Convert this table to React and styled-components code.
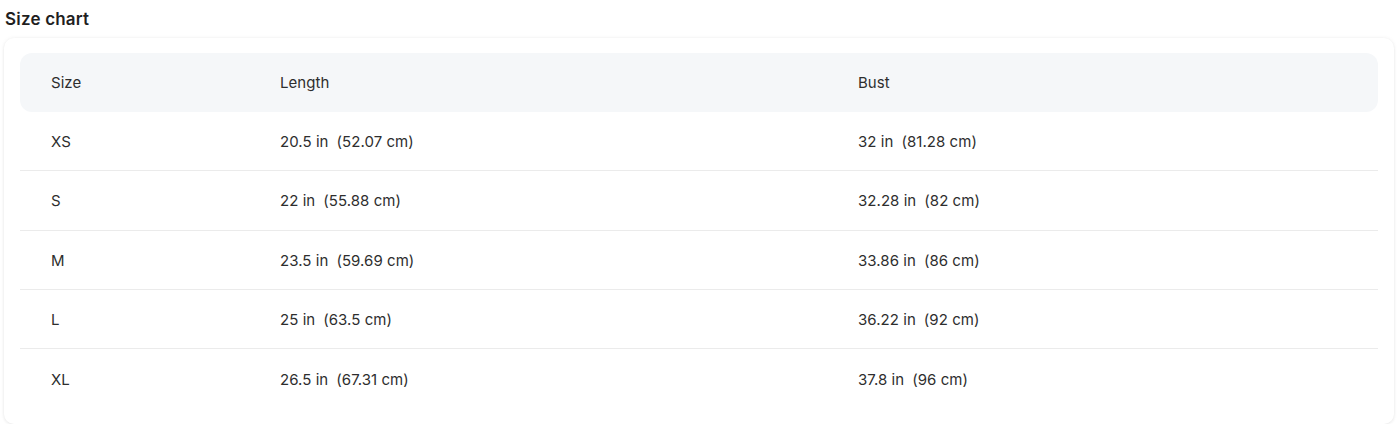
import React from "react";
import styled, { createGlobalStyle } from "styled-components";

const Global = createGlobalStyle`
  html, body { margin: 0; padding: 0; background: #fff; }
  body { font-family: Inter, "Noto Sans", sans-serif; color: #2b2b2b; }
`;

const Page = styled.div`
  padding: 6px 6px 0 4px;
  width: 1390px;
`;

const Title = styled.h2`
  margin: 0 0 0 1px;
  font-size: 17px;
  line-height: 26px;
  font-weight: 600;
  color: #1f1f1f;
  letter-spacing: 0.2px;
`;

const Card = styled.div`
  margin-top: 6px;
  background: #fff;
  border-radius: 10px;
  box-shadow: 0 0 4px rgba(0, 0, 0, 0.06), 0 1px 3px rgba(0, 0, 0, 0.06);
  padding: 15px 16px 16px 16px;
`;

const Row = styled.div`
  box-sizing: border-box;
  display: grid;
  grid-template-columns: 229px 578px 1fr;
  align-items: center;
  height: ${(p) => (p.$head ? "59px" : "59.3px")};
  padding-top: ${(p) => (p.$head ? "0" : "1px")};
  background: ${(p) => (p.$head ? "#f5f7f9" : "transparent")};
  border-radius: ${(p) => (p.$head ? "12px" : "0")};
  border-bottom: ${(p) => (p.$last || p.$head ? "none" : "1px solid #ebebeb")};
`;

const Cell = styled.div`
  padding-left: 31px;
  font-size: 15px;
  letter-spacing: 0.05px;
  color: #2e2e2e;
  white-space: nowrap;
`;

const Metric = styled.span`
  margin-left: 8px;
`;

const rows = [
  ["XS", "20.5 in", "52.07 cm", "32 in", "81.28 cm"],
  ["S", "22 in", "55.88 cm", "32.28 in", "82 cm"],
  ["M", "23.5 in", "59.69 cm", "33.86 in", "86 cm"],
  ["L", "25 in", "63.5 cm", "36.22 in", "92 cm"],
  ["XL", "26.5 in", "67.31 cm", "37.8 in", "96 cm"],
];

export default function App() {
  return (
    <Page>
      <Global />
      <Title>Size chart</Title>
      <Card>
        <Row $head>
          <Cell>Size</Cell>
          <Cell>Length</Cell>
          <Cell>Bust</Cell>
        </Row>
        {rows.map((r, i) => (
          <Row key={r[0]} $last={i === rows.length - 1}>
            <Cell>{r[0]}</Cell>
            <Cell>
              {r[1]}
              <Metric>({r[2]})</Metric>
            </Cell>
            <Cell>
              {r[3]}
              <Metric>({r[4]})</Metric>
            </Cell>
          </Row>
        ))}
      </Card>
    </Page>
  );
}
